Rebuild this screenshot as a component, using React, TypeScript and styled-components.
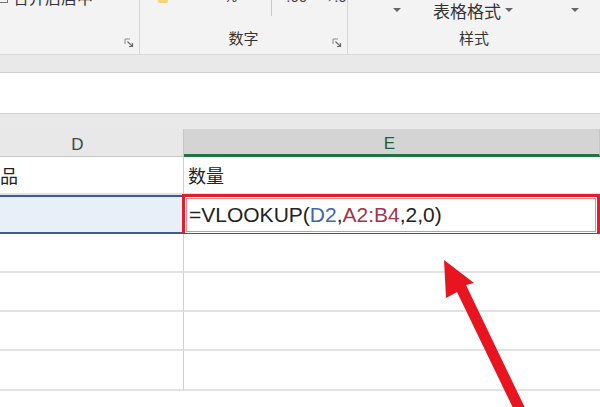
import styled, { createGlobalStyle } from 'styled-components';

const GlobalStyle = createGlobalStyle`
  html, body { margin: 0; padding: 0; background: #fff; overflow: hidden; }
  body { font-family: "Noto Sans CJK SC", "Liberation Sans", sans-serif; }
`;

const Page = styled.div`
  position: relative;
  width: 600px;
  height: 407px;
  overflow: hidden;
  background: #fff;
`;

const Ribbon = styled.div`
  display: grid;
  grid-template-columns: 140px 208px 1fr;
  height: 55px;
  background: #f3f3f3;
  border-bottom: 1px solid #dadada;
  box-sizing: border-box;
`;

const Group = styled.div<{ $last?: boolean }>`
  position: relative;
  display: flex;
  flex-direction: column;
  border-right: ${(p) => (p.$last ? 'none' : '1px solid #d6d6d6')};
  overflow: hidden;
`;

const TopRow = styled.div<{ $offset: number }>`
  display: flex;
  align-items: center;
  height: 20px;
  margin-top: ${(p) => p.$offset}px;
  font-size: 16px;
  color: #333;
  white-space: nowrap;
`;

const GroupLabel = styled.div`
  margin-top: auto;
  margin-bottom: 6px;
  text-align: center;
  font-size: 15px;
  line-height: 20px;
  color: #333;
`;

const Launcher = styled.svg`
  position: absolute;
  right: 5px;
  bottom: 6px;
`;

const Caret = styled.span<{ $x?: number }>`
  display: inline-block;
  width: 0;
  height: 0;
  border-left: 4px solid transparent;
  border-right: 4px solid transparent;
  border-top: 4px solid #666;
  margin-left: ${(p) => p.$x ?? 6}px;
`;

const SmallText = styled.span<{ $x: number }>`
  margin-left: ${(p) => p.$x}px;
  font-family: "Liberation Sans", sans-serif;
  font-size: 15px;
  color: #444;
`;

const VSep = styled.span<{ $x: number }>`
  display: inline-block;
  width: 1px;
  height: 22px;
  background: #c8c8c8;
  margin-left: ${(p) => p.$x}px;
  align-self: flex-start;
  margin-top: 8px;
`;

const Band = styled.div<{ $h: number }>`
  height: ${(p) => p.$h}px;
  background: #e9e9e9;
`;

const FormulaArea = styled.div`
  height: 40px;
  background: #fff;
  border-top: 1px solid #d0d0d0;
  border-bottom: 1px solid #d0d0d0;
`;

const HeaderRow = styled.div`
  display: grid;
  grid-template-columns: 184px 1fr;
  height: 28px;
`;

const ColHeader = styled.div<{ $active?: boolean; $shift?: number }>`
  display: flex;
  align-items: center;
  justify-content: center;
  font-family: "Liberation Sans", sans-serif;
  font-size: 17px;
  color: ${(p) => (p.$active ? '#1f5f3a' : '#444')};
  background: ${(p) => (p.$active ? '#d4d4d4' : '#e8e8e8')};
  border-right: 1px solid #c6c6c6;
  border-bottom: ${(p) => (p.$active ? '3px solid #217346' : '1px solid #c6c6c6')};
  box-sizing: border-box;
  padding-right: ${(p) => p.$shift ?? 0}px;
  padding-top: 4px;
`;

const Row = styled.div<{ $h: number }>`
  display: grid;
  grid-template-columns: 184px 1fr;
  height: ${(p) => p.$h}px;
`;

const Cell = styled.div<{ $first?: boolean; $selected?: boolean; $red?: boolean }>`
  display: flex;
  align-items: center;
  box-sizing: border-box;
  overflow: hidden;
  padding-left: ${(p) => (p.$first ? '0' : '4px')};
  font-size: 18px;
  color: #222;
  border-right: ${(p) => (p.$first ? '1px solid #cfcfcf' : 'none')};
  border-bottom: 2px solid #e2e2e2;
  background: ${(p) => (p.$selected ? '#e8eff9' : '#fff')};
  ${(p) => p.$selected && 'border-top: 2px solid #3c5a9a; border-bottom: 2px solid #3c5a9a;'}
  ${(p) =>
    p.$red &&
    `border: 3px solid #e11d2b; outline: 1px solid #f08a90; outline-offset: -5px; margin: -1px 0 -2px -2px; padding-left: 4px;`}
`;

const CutText = styled.span`
  margin-left: -18px;
  white-space: nowrap;
`;

const Formula = styled.span`
  font-family: "Liberation Sans", sans-serif;
  font-size: 21px;
  color: #222;
  white-space: nowrap;
`;

const Ref = styled.span<{ $c: string }>`
  color: ${(p) => p.$c};
`;

const Arrow = styled.svg`
  position: absolute;
  left: 430px;
  top: 250px;
`;

function DialogLauncher() {
  return (
    <Launcher width="10" height="10" viewBox="0 0 10 10">
      <path d="M1 6 V1 H6" fill="none" stroke="#8a8a8a" strokeWidth="1" />
      <path d="M3.5 3.5 L8.5 8.5 M5 8.5 H8.5 V5" fill="none" stroke="#6a6a6a" strokeWidth="1.2" />
    </Launcher>
  );
}

export default function App() {
  const gridRows = [38, 39, 39, 39, 39];
  return (
    <Page>
      <GlobalStyle />
      <Ribbon>
        <Group>
          <TopRow $offset={-13}>
            <svg width="12" height="14" viewBox="0 0 12 14" style={{ marginLeft: -3 }}>
              <rect x="0.5" y="0.5" width="10" height="12" fill="none" stroke="#777" />
            </svg>
            <span style={{ marginLeft: 4 }}>合并后居中</span>
            <Caret />
          </TopRow>
          <GroupLabel>&nbsp;</GroupLabel>
          <DialogLauncher />
        </Group>
        <Group>
          <TopRow $offset={-14}>
            <svg width="12" height="18" viewBox="0 0 12 18" style={{ marginLeft: 17 }}>
              <rect x="1" y="2" width="10" height="14" rx="2" fill="#f6d27a" />
            </svg>
            <SmallText $x={55}>%</SmallText>
            <VSep $x={34} />
            <SmallText $x={14}>.00</SmallText>
            <SmallText $x={12}>→.0</SmallText>
          </TopRow>
          <GroupLabel>数字</GroupLabel>
          <DialogLauncher />
        </Group>
        <Group $last>
          <TopRow $offset={0}>
            <Caret $x={45} />
            <span style={{ marginLeft: 32, fontSize: 17 }}>表格格式</span>
            <Caret $x={4} />
            <Caret $x={58} />
          </TopRow>
          <GroupLabel>样式</GroupLabel>
        </Group>
      </Ribbon>
      <Band $h={17} />
      <FormulaArea />
      <Band $h={15} />
      <HeaderRow>
        <ColHeader $shift={28}>D</ColHeader>
        <ColHeader $active $shift={4}>E</ColHeader>
      </HeaderRow>
      <Row $h={gridRows[0]}>
        <Cell $first>
          <CutText>产品</CutText>
        </Cell>
        <Cell>数量</Cell>
      </Row>
      <Row $h={gridRows[1]}>
        <Cell $first $selected />
        <Cell $red>
          <Formula>
            =VLOOKUP(<Ref $c="#3b67ad">D2</Ref>,<Ref $c="#a3344f">A2:B4</Ref>,2,0)
          </Formula>
        </Cell>
      </Row>
      {gridRows.slice(2).map((h, i) => (
        <Row key={i} $h={h}>
          <Cell $first />
          <Cell />
        </Row>
      ))}
      <Row $h={40}>
        <Cell $first />
        <Cell />
      </Row>
      <Arrow width="120" height="160" viewBox="0 0 120 160">
        <path
          d="M14 10 L44 33 L36 35 L96 160 L84 160 L27 42 L16 48 Z"
          fill="#e8141f"
        />
      </Arrow>
    </Page>
  );
}
